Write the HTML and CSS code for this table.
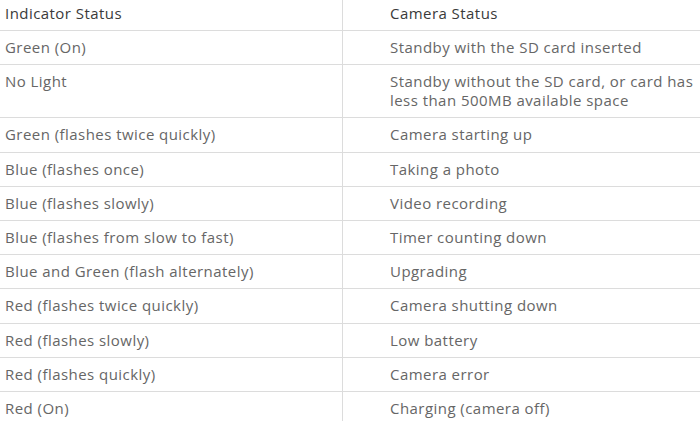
FILE: index.html
```html
<!DOCTYPE html>
<html>
<head>
<meta charset="utf-8">
<link rel="stylesheet" href="styles.css">
</head>
<body>
<table class="status-table">
  <thead>
    <tr><th class="col-a">Indicator Status</th><th class="col-b">Camera Status</th></tr>
  </thead>
  <tbody>
    <tr><td class="col-a">Green (On)</td><td class="col-b">Standby with the SD card inserted</td></tr>
    <tr><td class="col-a">No Light</td><td class="col-b">Standby without the SD card, or card has less than 500MB available space</td></tr>
    <tr><td class="col-a">Green (flashes twice quickly)</td><td class="col-b">Camera starting up</td></tr>
    <tr><td class="col-a">Blue (flashes once)</td><td class="col-b">Taking a photo</td></tr>
    <tr><td class="col-a">Blue (flashes slowly)</td><td class="col-b">Video recording</td></tr>
    <tr><td class="col-a">Blue (flashes from slow to fast)</td><td class="col-b">Timer counting down</td></tr>
    <tr><td class="col-a">Blue and Green (flash alternately)</td><td class="col-b">Upgrading</td></tr>
    <tr><td class="col-a">Red (flashes twice quickly)</td><td class="col-b">Camera shutting down</td></tr>
    <tr><td class="col-a">Red (flashes slowly)</td><td class="col-b">Low battery</td></tr>
    <tr><td class="col-a">Red (flashes quickly)</td><td class="col-b">Camera error</td></tr>
    <tr><td class="col-a">Red (On)</td><td class="col-b">Charging (camera off)</td></tr>
  </tbody>
</table>
</body>
</html>
```
FILE: styles.css
```css
html, body {
  margin: 0;
  padding: 0;
  background: #fff;
  overflow: hidden;
}
.status-table {
  width: 700px;
  border-collapse: collapse;
  table-layout: fixed;
  font-family: "Open Sans", sans-serif;
  font-size: 15px;
  line-height: 19px;
  letter-spacing: 0.45px;
  color: #666;
}
.status-table th,
.status-table td {
  text-align: left;
  vertical-align: top;
  border-bottom: 1px solid #dcdcdc;
  padding: 7.1px 4px 7.1px 5px;
  font-weight: normal;
}
.status-table th {
  color: #3a3a3a;
  padding-top: 4px;
  padding-bottom: 7px;
}
.col-a {
  width: 333px;
  border-right: 1px solid #dcdcdc;
}
.status-table .col-b {
  padding-left: 47px;
  padding-right: 0;
}
```
